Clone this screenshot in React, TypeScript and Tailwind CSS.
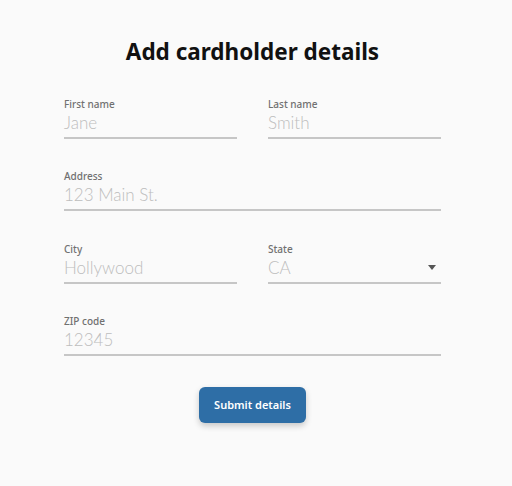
export default function App() {
  const Field = ({
    label,
    placeholder,
    select,
  }: {
    label: string;
    placeholder: string;
    select?: boolean;
  }) => (
    <div className="flex flex-col">
      <label className="text-[10px] font-medium leading-[14px] text-[#707070] [font-family:'Noto_Sans',sans-serif]">
        {label}
      </label>
      <div className="mt-[3px] flex h-[25px] items-center justify-between border-b-2 border-[#c6c6c6] pb-[5px]">
        <span className="text-[17px] font-light leading-[20px] text-[#bdbdbd] [font-family:Lato,sans-serif]">
          {placeholder}
        </span>
        {select && (
          <svg width="8" height="5" viewBox="0 0 8 5" className="mr-[5px]">
            <path d="M0 0h8L4 5z" fill="#555" />
          </svg>
        )}
      </div>
    </div>
  );

  return (
    <div className="min-h-[486px] w-full bg-[#fafafa] [font-family:'Noto_Sans',sans-serif]">
      <div className="ml-[64px] flex w-[377px] flex-col pt-[36px]">
        <h1 className="text-center text-[22.5px] font-bold leading-[32px] text-[#111]">
          Add cardholder details
        </h1>
        <div className="mt-[29px] grid grid-cols-2 gap-x-[31px] gap-y-[30.3px]">
          <Field label="First name" placeholder="Jane" />
          <Field label="Last name" placeholder="Smith" />
          <div className="col-span-2">
            <Field label="Address" placeholder="123 Main St." />
          </div>
          <Field label="City" placeholder="Hollywood" />
          <Field label="State" placeholder="CA" select />
          <div className="col-span-2">
            <Field label="ZIP code" placeholder="12345" />
          </div>
        </div>
        <div className="mt-[31px] flex justify-center">
          <button
            type="button"
            className="h-[36px] w-[107px] rounded-[6px] bg-[#2e6ea6] text-[11px] font-semibold text-white shadow-[0_3px_6px_rgba(0,0,0,0.2)]"
          >
            Submit details
          </button>
        </div>
      </div>
    </div>
  );
}
